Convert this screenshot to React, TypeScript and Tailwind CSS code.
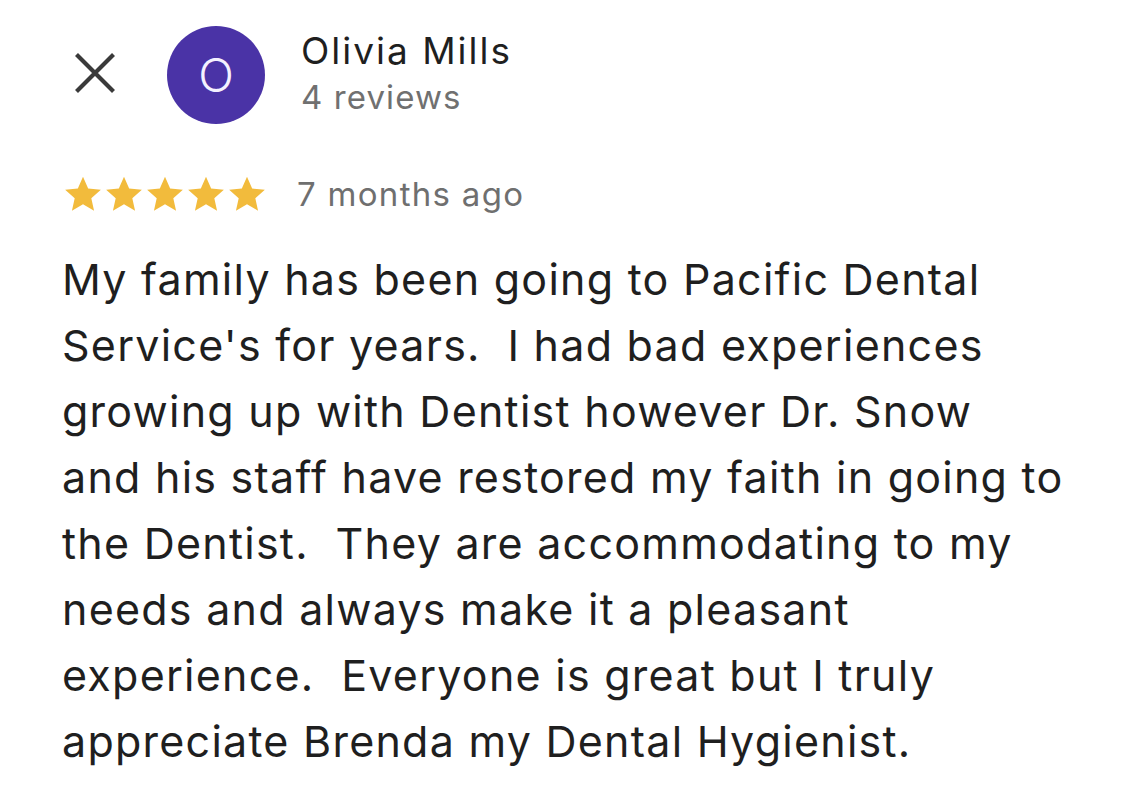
const Star = () => (
  <svg viewBox="0 0 24 24" className="w-[42px] h-[42px] -mx-[0.5px]" fill="#f2bb3c">
    <path d="M12 2.2l2.95 6.66 7.25.72-5.45 4.84 1.58 7.13L12 17.9l-6.33 3.65 1.58-7.13L1.8 9.58l7.25-.72z" />
  </svg>
);

export default function App() {
  return (
    <div className="w-[1125px] h-[810px] bg-white overflow-hidden font-['Inter',sans-serif]">
      <div className="flex items-center pt-[26px]">
        <div className="w-[167px] flex pl-[75px]">
          <svg viewBox="0 0 40 40" className="w-[40px] h-[40px] -mt-[4px]" stroke="#3a3a3a" strokeWidth={4.2} strokeLinecap="butt">
            <path d="M1.5 1.5L38.5 38.5M38.5 1.5L1.5 38.5" />
          </svg>
        </div>
        <div className="w-[98px] h-[98px] rounded-full bg-[#4a33a6] flex items-center justify-center text-[#f4f1ff] text-[47px] font-light">
          O
        </div>
        <div className="ml-[36px] flex flex-col -mt-[2px]">
          <div className="text-[37px] text-[#1f1f1f] leading-[46px] tracking-[2px]">Olivia Mills</div>
          <div className="text-[33px] text-[#707070] leading-[46px] tracking-[1.1px]">4 reviews</div>
        </div>
      </div>
      <div className="flex items-center pl-[62px] mt-[48px]">
        <div className="flex">
          <Star />
          <Star />
          <Star />
          <Star />
          <Star />
        </div>
        <div className="ml-[30px] text-[33px] text-[#6f6f6f] leading-[44px] tracking-[1.3px]">7 months ago</div>
      </div>
      <p className="pl-[62px] pr-[20px] mt-[30px] text-[43px] leading-[66px] text-[#1f1f1f] tracking-[1.25px] whitespace-pre-wrap">
        {"My family has been going to Pacific Dental\nService's for years.  I had bad experiences\ngrowing up with Dentist however Dr. Snow\nand his staff have restored my faith in going to\nthe Dentist.  They are accommodating to my\nneeds and always make it a pleasant\nexperience.  Everyone is great but I truly\nappreciate Brenda my Dental Hygienist."}
      </p>
    </div>
  );
}
